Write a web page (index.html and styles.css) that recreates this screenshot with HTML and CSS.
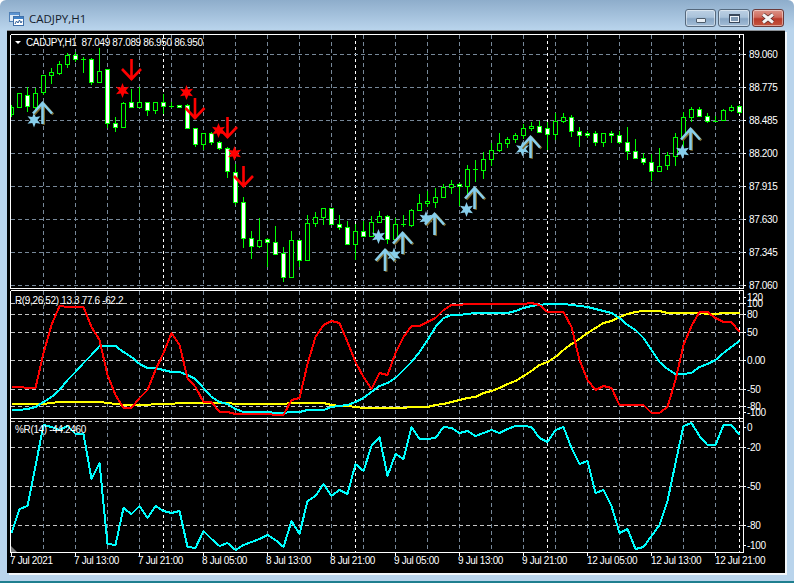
FILE: index.html
```html
<!DOCTYPE html>
<html lang="en">
<head>
  <meta charset="UTF-8">
  <title>CADJPY,H1</title>
  <link rel="stylesheet" href="styles.css">
</head>
<body>
  <div class="window">
    <div class="titlebar">
      <svg class="app-icon" width="15" height="14" viewBox="0 0 15 14">
        <rect x="0.5" y="0.5" width="10" height="9" fill="#dbe9f6" stroke="#4f7fb5"/>
        <rect x="1" y="1" width="9" height="2" fill="#5b93d0"/>
        <rect x="4.5" y="4.5" width="10" height="9" fill="#fff" stroke="#3f6fa8"/>
        <rect x="5" y="5" width="9" height="2" fill="#3f82c8"/>
        <path d="M6 12l1.5-3 1.5 2 1.500-3 1.500 3 1-2" fill="none" stroke="#2f5f9a"/>
      </svg>
      <span class="title-text">CADJPY,H1</span>
      <div class="buttons">
        <div class="btn btn-min"><span class="min-glyph"></span></div>
        <div class="btn btn-max"><span class="max-glyph"></span></div>
        <div class="btn btn-close">
          <svg width="14" height="11" viewBox="0 0 14 11">
            <path d="M2 1.500l10 8M12 1.500l-10 8" class="x-back"/>
            <path d="M2 1.500l10 8M12 1.500l-10 8" class="x-front"/>
          </svg>
        </div>
      </div>
    </div>

    <div class="client">
      <svg class="pane pane-main" id="pane1" width="778" height="258" viewBox="7 31 778 258">
        <g class="plot"></g>
        <path class="white-fill" d="M15 41h6l-3 3z"/>
        <text class="legend" x="26" y="46">CADJPY,H1  87.049 87.089 86.950 86.950</text>
        <g class="scale"></g>
      </svg>
      <svg class="pane pane-macd" id="pane2" width="778" height="130" viewBox="7 289 778 130">
        <g class="plot"></g>
        <text class="legend" x="15" y="304">R(9,26,52) 13.3 77.6 -62.2</text>
        <g class="scale"></g>
      </svg>
      <svg class="pane pane-wpr" id="pane3" width="778" height="134" viewBox="7 419 778 134">
        <g class="plot"></g>
        <path class="corner-mark" d="M11 546l6 6h-6z"/>
        <text class="legend" x="15" y="433">%R(14) -44.2460</text>
        <g class="scale"></g>
      </svg>
      <div class="time-axis" id="axis">
        <span>7 Jul 2021</span>
        <span>7 Jul 13:00</span>
        <span>7 Jul 21:00</span>
        <span>8 Jul 05:00</span>
        <span>8 Jul 13:00</span>
        <span>8 Jul 21:00</span>
        <span>9 Jul 05:00</span>
        <span>9 Jul 13:00</span>
        <span>9 Jul 21:00</span>
        <span>12 Jul 05:00</span>
        <span>12 Jul 13:00</span>
        <span>12 Jul 21:00</span>
      </div>
    </div>
  </div>
  <script src="chart.js"></script>
</body>
</html>
```

FILE: styles.css
```css
body {
  margin: 0;
  background: #fff;
  font-family: "Liberation Sans", sans-serif;
}

.window {
  width: 794px;
  height: 581px;
  border-bottom: 2px solid #1f7f8f;
  border-radius: 6px 6px 0 0;
  background: linear-gradient(#8eadcb 0, #b9d4ec 30px, #b9d4ec 100%);
  display: flex;
  flex-direction: column;
}

.titlebar {
  height: 30px;
  box-sizing: border-box;
  padding: 9px 10px 0 9px;
  display: flex;
  align-items: flex-start;
}
.app-icon {
  margin: 3px 0 0 0;
}
.title-text {
  margin: 2px 0 0 5px;
  font-family: "Open Sans", sans-serif;
  font-size: 11.5px;
  line-height: 15px;
  color: #14202c;
}
.buttons {
  margin-left: auto;
  display: flex;
}
.btn {
  width: 32px;
  height: 18px;
  box-sizing: border-box;
  margin-left: 2px;
  border: 1px solid #55687c;
  border-radius: 3px;
  box-shadow: inset 0 0 0 1px rgba(255, 255, 255, 0.45);
  background: linear-gradient(#bcd0e4 0, #a9c2da 45%, #88a6c4 55%, #a3bdd6 100%);
  display: flex;
  align-items: center;
  justify-content: center;
}
.btn-min {
  width: 31px;
}
.btn-close {
  background: linear-gradient(#dc9488 0, #cf6a5c 45%, #b93a2a 55%, #c4553f 100%);
  border-color: #6b3a3a;
}
.min-glyph {
  width: 10px;
  height: 5px;
  box-sizing: border-box;
  margin-top: 4px;
  background: #e8eef4;
  border: 1px solid #4d5c6b;
  border-radius: 1px;
}
.max-glyph {
  width: 11px;
  height: 9px;
  box-sizing: border-box;
  background: #7f98b2;
  border: 1px solid #39475a;
  box-shadow: inset 0 0 0 1px #eef3f8;
  border-top-width: 2px;
}
.x-back {
  fill: none;
  stroke: #5a2b28;
  stroke-width: 4.5;
}
.x-front {
  fill: none;
  stroke: #f4f4f4;
  stroke-width: 3;
}

.client {
  width: 778px;
  height: 542px;
  margin-left: 7px;
  background: #000;
  border-top: 1px solid #8a8f95;
  box-shadow: 2px 2px 0 #f2f6fa;
  display: flex;
  flex-direction: column;
}
.pane {
  display: block;
  flex: none;
  overflow: visible;
}

.legend,
.scale-text {
  font-family: "Liberation Sans", sans-serif;
  font-size: 10px;
  letter-spacing: -0.35px;
  fill: #fff;
  white-space: pre;
}
.white-fill {
  fill: #fff;
}
.corner-mark {
  fill: #777;
}
.frame {
  stroke: #fff;
  stroke-width: 1;
  fill: none;
  shape-rendering: crispEdges;
}
.grid-v,
.grid-h {
  stroke: #778899;
  stroke-width: 1;
  stroke-dasharray: 4 3;
  shape-rendering: crispEdges;
}
.grid-level {
  stroke: #c4c4c4;
  stroke-width: 1;
  stroke-dasharray: 4 3;
  shape-rendering: crispEdges;
}
.period {
  stroke: #fff;
  stroke-width: 1;
  stroke-dasharray: 3 3;
  shape-rendering: crispEdges;
}
.candle {
  stroke: #00ff00;
  stroke-width: 1;
  shape-rendering: crispEdges;
}
.line {
  fill: none;
  stroke-width: 2;
  stroke-linejoin: round;
  shape-rendering: crispEdges;
}
.line-red { stroke: #ff0000; }
.line-cyan { stroke: #00ffff; }
.line-yellow { stroke: #ffff00; }

.arrow {
  fill: none;
  stroke-width: 2.6;
}
.arrow-red { stroke: #ff0000; }
.arrow-blue { stroke: #87ceeb; }
.arrow-shadow { stroke: #7d6a2c; }
.star-red { fill: #ff0000; }
.star-blue { fill: #87ceeb; }

.time-axis {
  height: 20px;
  display: flex;
  font-size: 10px;
  letter-spacing: -0.35px;
  line-height: 16px;
  color: #fff;
  white-space: nowrap;
}
.time-axis span {
  width: 64px;
  flex: none;
}
.time-axis span:first-child {
  margin-left: 3px;
}
.time-axis span:nth-child(10) {
  margin-left: 1px;
}
```

FILE: chart.js
```javascript
var NS = "http://www.w3.org/2000/svg";

function el(parent, name, attrs) {
  var node = document.createElementNS(NS, name);
  for (var k in attrs) node.setAttribute(k, attrs[k]);
  parent.appendChild(node);
  return node;
}

function cx(i) { return 11.5 + 8 * i; }

// candles: top, bottom, high, low, 1 = white body
var candles = [
  [107,114,105,117,0],[93,107,93,108,0],[95,106,87,112,1],[93,107,88,110,0],[75,92,75,95,0],
  [72,75,68,84,0],[64,73,61,75,0],[55,64,53,68,0],[55,59,52,62,1],[59,59,57,73,0],
  [59,82,58,85,1],[71,82,48,83,0],[69,123,69,128,1],[123,127,117,132,1],[103,127,102,128,0],
  [102,107,89,108,1],[102,107,87,108,0],[102,110,102,116,1],[102,110,102,114,0],[102,106,94,114,1],
  [106,106,102,108,0],[105,107,105,108,1],[105,128,104,129,1],[128,144,128,147,1],[133,144,133,150,0],
  [133,142,132,145,1],[142,148,141,150,1],[148,171,147,178,1],[172,202,164,205,1],[202,238,197,248,1],
  [238,246,231,259,1],[240,246,218,248,0],[239,242,238,267,1],[242,254,226,255,1],[253,277,247,282,1],
  [240,277,231,277,0],[240,260,240,267,1],[223,260,215,260,0],[217,223,212,227,0],[208,217,208,225,0],
  [208,224,208,224,1],[224,227,215,230,1],[227,244,221,244,1],[231,244,224,260,0],[231,236,221,237,1],
  [222,236,216,237,0],[216,222,211,223,0],[216,239,215,244,1],[224,239,218,240,0],[224,224,215,227,0],
  [210,225,209,227,0],[203,210,194,211,0],[201,203,191,207,0],[197,202,188,208,0],[187,197,184,198,0],
  [184,187,180,194,0],[184,186,183,206,1],[169,186,165,195,0],[169,169,160,182,0],[159,170,152,179,0],
  [150,159,143,166,0],[143,150,133,152,0],[139,143,137,148,0],[135,139,133,143,0],[128,135,124,139,0],
  [126,128,122,131,0],[126,132,121,133,1],[128,134,122,150,1],[121,134,113,140,0],[117,121,113,123,0],
  [117,131,115,137,1],[131,135,127,147,1],[133,135,131,138,1],[133,142,131,146,1],[133,142,133,147,0],
  [133,135,131,143,1],[135,142,131,144,1],[142,151,127,160,1],[151,158,139,159,1],[158,162,153,165,1],
  [162,171,154,181,1],[166,171,148,171,0],[155,165,152,170,0],[137,156,133,166,0],[117,137,112,150,0],
  [109,117,107,122,0],[109,116,107,117,1],[116,121,113,123,1],[121,121,116,122,0],[110,120,109,121,0],
  [107,110,105,112,0],[106,112,105,114,1]
];

var redLine = [387,387,388,388,353,325,306,307,307,307,327,340,375,395,408,408,398,390,370,353,333,345,378,387,402,402,412,412,414,414,414,414,414,
  415,415,400,398,364,337,325,321,323,342,362,377,389,373,375,353,337,326,326,322,318,310,305,305,304,304,304,304,304,304,304,304,
  303,305,312,312,312,327,360,380,390,386,388,405,405,405,405,413,413,407,380,345,326,312,312,318,322,322,332];
var cyanLine = [410,410,409,407,402,397,390,380,372,363,355,346,346,346,352,357,364,368,368,370,372,372,375,379,388,397,402,404,409,412,412,412,412,
  413,413,412,412,410,410,410,407,406,405,402,398,392,386,383,378,370,362,352,340,327,318,315,315,314,313,313,313,313,313,311,308,
  306,305,304,304,304,305,306,307,309,311,313,318,325,330,338,350,362,369,374,374,373,367,364,360,353,347,341];
var yellowLine = [404,404,404,404,404,403,402,402,402,402,402,402,403,404,405,405,405,405,404,404,404,403,403,403,403,403,403,403,404,404,404,404,404,
  404,404,403,403,403,403,403,405,406,406,407,408,408,408,408,408,408,407,407,407,405,404,402,400,398,397,393,391,388,384,381,376,
  371,365,362,357,350,344,339,333,328,323,321,317,314,312,311,311,311,313,313,313,313,313,314,314,313,313,313];
var wprLine = [533,509,506,466,425,427,430,426,434,434,479,463,544,545,508,514,506,518,506,511,513,511,547,548,531,539,546,543,550,545,542,539,535,
  540,547,521,534,501,496,484,496,490,494,464,471,446,437,476,454,459,427,439,439,438,427,428,433,431,436,433,430,433,429,426,426,
  427,438,442,430,427,448,464,461,493,490,506,533,529,549,547,536,525,501,463,426,423,436,445,445,425,425,435];

var downArrows = [[131.5,59],[195,98],[227.5,117],[243.5,166]];
var upArrows = [[42.5,103],[385,250],[402.5,233],[434.5,214],[474.5,188],[530.5,137],[690.5,129]];
var redStars = [[122.5,90.5],[186.5,92.5],[218.5,130.5],[234.5,153.5]];
var blueStars = [[34,120],[378.5,236.5],[394,255],[426,218.5],[466.500,209.5],[522.5,149],[682.5,151.5]];

function plotLine(g, data, cls) {
  var pts = data.map(function (y, i) { return cx(i) + "," + y; }).join(" ");
  el(g, "polyline", { points: pts, "class": "line " + cls });
}

function star(g, x, y, cls) {
  var pts = [];
  for (var i = 0; i < 12; i++) {
    var a = -Math.PI / 2 + i * Math.PI / 6;
    var r = i % 2 ? 3.4 : 7.5;
    pts.push((x + r * Math.cos(a)).toFixed(1) + "," + (y + r * Math.sin(a)).toFixed(1));
  }
  el(g, "polygon", { points: pts.join(" "), "class": cls });
}

function downArrow(g, x, y) {
  var d = "M" + x + " " + y + "v21M" + (x - 9.5) + " " + (y + 10) + "L" + x + " " + (y + 20) + "L" + (x + 9.5) + " " + (y + 10);
  el(g, "path", { d: d, "class": "arrow arrow-red" });
}

function upArrow(g, x, y) {
  var d = "M" + x + " " + (y + 21) + "v-21M" + (x - 9.5) + " " + (y + 10.5) + "L" + x + " " + y + "L" + (x + 9.5) + " " + (y + 10.5);
  el(g, "path", { d: d, "class": "arrow arrow-shadow", transform: "translate(1.2 0.8)" });
  el(g, "path", { d: d, "class": "arrow arrow-blue" });
}

// grid and frame, shared by the three panes
function drawPane(svg, top, bottom, levels, hClass, frameTop) {
  var g = svg.querySelector(".plot");
  var i;
  for (i = 43; i <= 715; i += 32) {
    el(g, "line", { x1: i + 0.5, x2: i + 0.5, y1: top, y2: bottom, "class": "grid-v" });
  }
  [163, 355, 547, 739].forEach(function (x) {
    el(g, "line", { x1: x + 0.5, x2: x + 0.5, y1: top, y2: bottom, "class": "period" });
  });
  levels.forEach(function (y) {
    el(g, "line", { x1: 11, x2: 743, y1: y + 0.5, y2: y + 0.5, "class": hClass });
  });
  var frame = "M10.5 " + frameTop + "V" + (bottom + 0.5) + "H743.5V" + frameTop;
  if (frameTop > 30 && frameTop !== 419) frame += "H10.5";
  el(svg, "path", { d: frame, "class": "frame" });
  return g;
}

function drawScale(svg, labels, x) {
  var g = svg.querySelector(".scale");
  labels.forEach(function (l) {
    el(g, "line", { x1: 744, x2: 746, y1: l[1] + 0.5, y2: l[1] + 0.5, "class": "frame" });
    var t = el(g, "text", { x: x, y: l[1] + 4, "class": "scale-text" });
    t.textContent = l[0];
  });
}

var pane1 = document.getElementById("pane1");
var pane2 = document.getElementById("pane2");
var pane3 = document.getElementById("pane3");

var g1 = drawPane(pane1, 35, 288, [54, 87, 120, 153, 186, 219, 252, 285], "grid-h", 34.5);
candles.forEach(function (c, i) {
  var x = cx(i);
  el(g1, "line", { x1: x, x2: x, y1: c[2], y2: c[3], "class": "candle" });
  if (c[0] === c[1]) {
    el(g1, "line", { x1: x - 2.5, x2: x + 2.5, y1: c[0] + 0.5, y2: c[0] + 0.5, "class": "candle" });
  } else {
    // first candle is cut by the left edge of the chart
    var left = Math.max(x - 2, 11.5);
    el(g1, "rect", { x: left, y: c[0] + 0.5, width: x + 2 - left, height: c[1] - c[0], fill: c[4] ? "#fff" : "#000", "class": "candle" });
  }
});
blueStars.forEach(function (s) { star(g1, s[0], s[1], "star-blue"); });
redStars.forEach(function (s) { star(g1, s[0], s[1], "star-red"); });
upArrows.forEach(function (a) { upArrow(g1, a[0], a[1]); });
downArrows.forEach(function (a) { downArrow(g1, a[0], a[1]); });
drawScale(pane1, [["89.060",54],["88.775",87],["88.485",120],["88.200",153],["87.915",186],["87.630",219],["87.345",252],["87.060",285]], 749);

var g2 = drawPane(pane2, 291, 418, [303, 314, 332, 360, 389, 406], "grid-level", 290.5);
plotLine(g2, yellowLine, "line-yellow");
plotLine(g2, cyanLine, "line-cyan");
plotLine(g2, redLine, "line-red");
drawScale(pane2, [["120",297],["100",303],["80",314],["50",332],["0.00",360],["-50",389],["-80",406],["-100",412]], 747);

var g3 = drawPane(pane3, 419, 552, [421, 447, 486, 525], "grid-level", 419);
plotLine(g3, wprLine, "line-cyan");
drawScale(pane3, [["0",427],["-20",447],["-50",486],["-80",525],["-100",545]], 747);

// ticks under the last pane
[11, 75, 139, 203, 267, 331, 395, 459, 523, 587, 651, 715].forEach(function (x) {
  el(pane3, "line", { x1: x + 0.5, x2: x + 0.5, y1: 552, y2: 556, "class": "frame" });
});
```
